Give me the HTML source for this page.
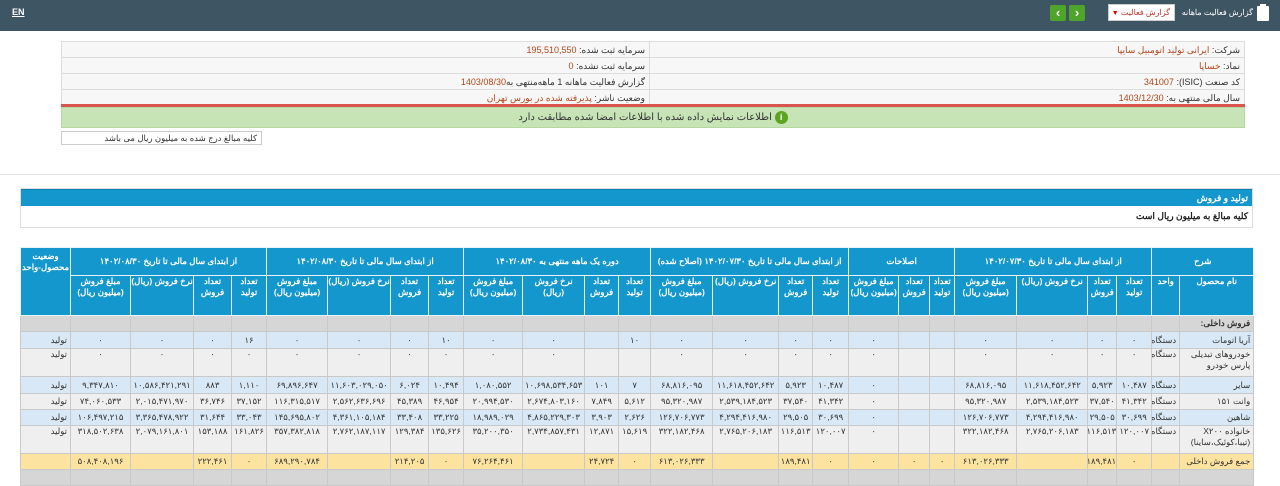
<!DOCTYPE html>
<html><head><meta charset="utf-8">
<style>
*{box-sizing:border-box;margin:0;padding:0}
html,body{width:1280px;height:473px;overflow:hidden;background:#fff;font-family:"Liberation Sans","Noto Sans CJK SC",sans-serif;font-size:9px;color:#333}
.abs{position:absolute}
#top{left:0;top:0;width:1280px;height:31px;background:#3e5563}
.info{left:61px;top:41px;width:1184px;border:1px solid #ddd;background:#f7f7f7;direction:rtl}
.info div{height:16px;border-bottom:1px solid #ddd;display:flex}
.info span{display:block;width:595px;padding:3px 4px;line-height:10px;color:#333}
.info span+span{width:589px;border-right:1px solid #ddd}
.info b{font-weight:normal;color:#b5451b}
table{border-collapse:collapse;table-layout:fixed;direction:rtl}
td,th{border:1px solid #c9c9c9;text-align:center;overflow:hidden;line-height:11px;font-size:8.5px;padding:0}
td{white-space:nowrap}
th{background:#1497cc;color:#fff;border-color:#e8f3f8;font-weight:bold}
tr.b td{background:#d8e8f6}
tr.g td{background:#efefef}
tr.s td{background:#d6d6d6}
tr.y td{background:#fde3a0}
td.n{text-align:right;padding-right:3px}
td.w{white-space:normal}
</style></head><body>
<div id="top" class="abs">
 <div class="abs" style="left:12px;top:7px;color:#fff;font-size:9px;font-weight:bold;text-decoration:underline">EN</div>
 <div class="abs" style="left:1050px;top:5px;width:16px;height:16px;background:#4fa52a;border-radius:2px;color:#fff;font-size:13px;line-height:15px;text-align:center;font-weight:bold">‹</div>
 <div class="abs" style="left:1069px;top:5px;width:16px;height:16px;background:#4fa52a;border-radius:2px;color:#fff;font-size:13px;line-height:15px;text-align:center;font-weight:bold">›</div>
 <div class="abs" style="left:1108px;top:4px;width:67px;height:17px;background:#fff;border:1px solid #ccc;direction:rtl;color:#c0392b;font-size:8px;line-height:15px;padding-right:4px;white-space:nowrap;overflow:hidden">گزارش فعالیت <span style="color:#d00;font-size:7px">▼</span></div>
 <div class="abs" style="left:1180px;top:8px;color:#fff;font-size:8px;direction:rtl;width:73px;white-space:nowrap;text-align:right;letter-spacing:-0.2px">گزارش فعالیت ماهانه</div>
 <div class="abs" style="left:1257px;top:6px;width:12px;height:15px;background:#fff;border-radius:1px"></div>
 <div class="abs" style="left:1260px;top:4px;width:6px;height:3px;background:#fff"></div>
</div>
<div class="info abs">
 <div><span>شرکت: <b>ایرانی تولید اتومبیل سایپا</b></span><span>سرمایه ثبت شده: <b>195,510,550</b></span></div>
 <div><span>نماد: <b>خساپا</b></span><span>سرمایه ثبت نشده: <b>0</b></span></div>
 <div><span>کد صنعت (ISIC): <b>341007</b></span><span>گزارش فعالیت ماهانه 1 ماهه‌منتهی به<b>1403/08/30</b></span></div>
 <div style="border-bottom:0"><span>سال مالی منتهی به: <b>1403/12/30</b></span><span>وضعیت ناشر: <b>پذیرفته شده در بورس تهران</b></span></div>
</div>
<div class="abs" style="left:61px;top:104px;width:1184px;height:3px;background:#d9534f"></div>
<div class="abs" style="left:61px;top:107px;width:1184px;height:21px;background:#c6e4b6;border:1px solid #b5d8a0;text-align:center;direction:rtl;font-size:10px;line-height:19px;color:#333"><span style="display:inline-block;width:13px;height:13px;border-radius:50%;background:#5da521;color:#fff;font-size:9px;line-height:13px;vertical-align:middle;font-weight:bold">i</span> اطلاعات نمایش داده شده با اطلاعات امضا شده مطابقت دارد</div>
<div class="abs" style="left:61px;top:131px;width:201px;height:14px;border:1px solid #ccc;direction:rtl;font-size:8.5px;line-height:12px;padding-right:4px;color:#333">کلیه مبالغ درج شده به میلیون ریال می باشد</div>
<div class="abs" style="left:0;top:174px;width:1280px;height:1px;background:#e6e6e6"></div>
<div class="abs" style="left:20px;top:188px;width:1233px;height:40px;border:1px solid #ddd;direction:rtl">
 <div style="background:#1497cc;height:17px;color:#fff;font-weight:bold;font-size:9px;line-height:17px;padding-right:4px;border-top:1px solid #0c7fae">تولید و فروش</div>
 <div style="height:21px;font-weight:bold;font-size:9px;line-height:20px;padding-right:4px;color:#222">کلیه مبالغ به میلیون ریال است</div>
</div>
<table class="abs" style="left:20px;top:247px;width:1233px">
<colgroup><col style="width:74px"><col style="width:28px"><col style="width:35px"><col style="width:29px"><col style="width:71px"><col style="width:62px"><col style="width:25px"><col style="width:31px"><col style="width:50px"><col style="width:36px"><col style="width:34px"><col style="width:66px"><col style="width:62px"><col style="width:32px"><col style="width:34px"><col style="width:62px"><col style="width:59px"><col style="width:35px"><col style="width:38px"><col style="width:63px"><col style="width:61px"><col style="width:35px"><col style="width:38px"><col style="width:63px"><col style="width:60px"><col style="width:50px"></colgroup>
<tr style="height:28px"><th colspan="2">شرح</th><th colspan="4">از ابتدای سال مالی تا تاریخ ۱۴۰۲/۰۷/۳۰</th><th colspan="3">اصلاحات</th><th colspan="4">از ابتدای سال مالی تا تاریخ ۱۴۰۲/۰۷/۳۰ (اصلاح شده)</th><th colspan="4">دوره یک ماهه منتهی به ۱۴۰۲/۰۸/۳۰</th><th colspan="4">از ابتدای سال مالی تا تاریخ ۱۴۰۲/۰۸/۳۰</th><th colspan="4">از ابتدای سال مالی تا تاریخ ۱۴۰۲/۰۸/۳۰</th><th rowspan="2" style="vertical-align:top;padding-top:3px">وضعیت محصول-واحد</th></tr>
<tr style="height:40px;vertical-align:top"><th>نام محصول</th><th>واحد</th><th>تعداد تولید</th><th>تعداد فروش</th><th>نرخ فروش (ریال)</th><th>مبلغ فروش (میلیون ریال)</th><th>تعداد تولید</th><th>تعداد فروش</th><th>مبلغ فروش (میلیون ریال)</th><th>تعداد تولید</th><th>تعداد فروش</th><th>نرخ فروش (ریال)</th><th>مبلغ فروش (میلیون ریال)</th><th>تعداد تولید</th><th>تعداد فروش</th><th>نرخ فروش (ریال)</th><th>مبلغ فروش (میلیون ریال)</th><th>تعداد تولید</th><th>تعداد فروش</th><th>نرخ فروش (ریال)</th><th>مبلغ فروش (میلیون ریال)</th><th>تعداد تولید</th><th>تعداد فروش</th><th>نرخ فروش (ریال)</th><th>مبلغ فروش (میلیون ریال)</th></tr>
<tr class="s" style="height:16px"><td class="n" style="font-weight:bold">فروش داخلی:</td><td></td><td></td><td></td><td></td><td></td><td></td><td></td><td></td><td></td><td></td><td></td><td></td><td></td><td></td><td></td><td></td><td></td><td></td><td></td><td></td><td></td><td></td><td></td><td></td><td></td></tr>
<tr class="b" style="height:17px"><td class="n">آریا اتومات</td><td class="n">دستگاه</td><td>۰</td><td>۰</td><td>۰</td><td>۰</td><td></td><td></td><td>۰</td><td>۰</td><td>۰</td><td>۰</td><td>۰</td><td>۱۰</td><td></td><td>۰</td><td>۰</td><td>۱۰</td><td>۰</td><td>۰</td><td>۰</td><td>۱۶</td><td>۰</td><td>۰</td><td>۰</td><td class="n">تولید</td></tr>
<tr class="g" style="height:28px;vertical-align:top"><td class="n w">خودروهای تبدیلی پارس خودرو</td><td class="n">دستگاه</td><td>۰</td><td>۰</td><td>۰</td><td>۰</td><td></td><td></td><td>۰</td><td>۰</td><td>۰</td><td>۰</td><td>۰</td><td></td><td></td><td>۰</td><td>۰</td><td>۰</td><td>۰</td><td>۰</td><td>۰</td><td>۰</td><td>۰</td><td>۰</td><td>۰</td><td class="n">تولید</td></tr>
<tr class="b" style="height:17px"><td class="n">سایر</td><td class="n">دستگاه</td><td>۱۰,۴۸۷</td><td>۵,۹۲۳</td><td>۱۱,۶۱۸,۴۵۲,۶۴۲</td><td>۶۸,۸۱۶,۰۹۵</td><td></td><td></td><td>۰</td><td>۱۰,۴۸۷</td><td>۵,۹۲۳</td><td>۱۱,۶۱۸,۴۵۲,۶۴۲</td><td>۶۸,۸۱۶,۰۹۵</td><td>۷</td><td>۱۰۱</td><td>۱۰,۶۹۸,۵۳۴,۶۵۳</td><td>۱,۰۸۰,۵۵۲</td><td>۱۰,۴۹۴</td><td>۶,۰۲۴</td><td>۱۱,۶۰۳,۰۲۹,۰۵۰</td><td>۶۹,۸۹۶,۶۴۷</td><td>۱,۱۱۰</td><td>۸۸۳</td><td>۱۰,۵۸۶,۴۲۱,۲۹۱</td><td>۹,۳۴۷,۸۱۰</td><td class="n">تولید</td></tr>
<tr class="g" style="height:16px"><td class="n">وانت ۱۵۱</td><td class="n">دستگاه</td><td>۴۱,۳۴۲</td><td>۳۷,۵۴۰</td><td>۲,۵۳۹,۱۸۴,۵۲۳</td><td>۹۵,۳۲۰,۹۸۷</td><td></td><td></td><td>۰</td><td>۴۱,۳۴۲</td><td>۳۷,۵۴۰</td><td>۲,۵۳۹,۱۸۴,۵۲۳</td><td>۹۵,۳۲۰,۹۸۷</td><td>۵,۶۱۲</td><td>۷,۸۴۹</td><td>۲,۶۷۴,۸۰۳,۱۶۰</td><td>۲۰,۹۹۴,۵۳۰</td><td>۴۶,۹۵۴</td><td>۴۵,۳۸۹</td><td>۲,۵۶۲,۶۳۶,۶۹۶</td><td>۱۱۶,۳۱۵,۵۱۷</td><td>۳۷,۱۵۲</td><td>۳۶,۷۴۶</td><td>۲,۰۱۵,۴۷۱,۹۷۰</td><td>۷۴,۰۶۰,۵۳۳</td><td class="n">تولید</td></tr>
<tr class="b" style="height:16px"><td class="n">شاهین</td><td class="n">دستگاه</td><td>۳۰,۶۹۹</td><td>۲۹,۵۰۵</td><td>۴,۲۹۴,۴۱۶,۹۸۰</td><td>۱۲۶,۷۰۶,۷۷۳</td><td></td><td></td><td>۰</td><td>۳۰,۶۹۹</td><td>۲۹,۵۰۵</td><td>۴,۲۹۴,۴۱۶,۹۸۰</td><td>۱۲۶,۷۰۶,۷۷۳</td><td>۲,۶۲۶</td><td>۳,۹۰۳</td><td>۴,۸۶۵,۲۲۹,۳۰۳</td><td>۱۸,۹۸۹,۰۲۹</td><td>۳۳,۲۲۵</td><td>۳۳,۴۰۸</td><td>۴,۳۶۱,۱۰۵,۱۸۴</td><td>۱۴۵,۶۹۵,۸۰۲</td><td>۳۳,۰۴۳</td><td>۳۱,۶۴۴</td><td>۳,۳۶۵,۴۷۸,۹۲۲</td><td>۱۰۶,۴۹۷,۲۱۵</td><td class="n">تولید</td></tr>
<tr class="g" style="height:28px;vertical-align:top"><td class="n w">خانواده X۲۰۰ (تیبا،کوئیک،ساینا)</td><td class="n">دستگاه</td><td>۱۲۰,۰۰۷</td><td>۱۱۶,۵۱۳</td><td>۲,۷۶۵,۲۰۶,۱۸۳</td><td>۳۲۲,۱۸۲,۴۶۸</td><td></td><td></td><td>۰</td><td>۱۲۰,۰۰۷</td><td>۱۱۶,۵۱۳</td><td>۲,۷۶۵,۲۰۶,۱۸۳</td><td>۳۲۲,۱۸۲,۴۶۸</td><td>۱۵,۶۱۹</td><td>۱۲,۸۷۱</td><td>۲,۷۳۴,۸۵۷,۴۳۱</td><td>۳۵,۲۰۰,۳۵۰</td><td>۱۳۵,۶۲۶</td><td>۱۲۹,۳۸۴</td><td>۲,۷۶۲,۱۸۷,۱۱۷</td><td>۳۵۷,۳۸۲,۸۱۸</td><td>۱۶۱,۸۲۶</td><td>۱۵۳,۱۸۸</td><td>۲,۰۷۹,۱۶۱,۸۰۱</td><td>۳۱۸,۵۰۲,۶۳۸</td><td class="n">تولید</td></tr>
<tr class="y" style="height:16px"><td class="n">جمع فروش داخلی</td><td></td><td>۰</td><td>۱۸۹,۴۸۱</td><td></td><td>۶۱۳,۰۲۶,۳۳۳</td><td>۰</td><td>۰</td><td>۰</td><td>۰</td><td>۱۸۹,۴۸۱</td><td></td><td>۶۱۳,۰۲۶,۳۳۳</td><td>۰</td><td>۲۴,۷۲۴</td><td></td><td>۷۶,۲۶۴,۴۶۱</td><td>۰</td><td>۲۱۴,۲۰۵</td><td></td><td>۶۸۹,۲۹۰,۷۸۴</td><td>۰</td><td>۲۲۲,۴۶۱</td><td></td><td>۵۰۸,۴۰۸,۱۹۶</td><td></td></tr>
<tr class="s" style="height:16px"><td></td><td></td><td></td><td></td><td></td><td></td><td></td><td></td><td></td><td></td><td></td><td></td><td></td><td></td><td></td><td></td><td></td><td></td><td></td><td></td><td></td><td></td><td></td><td></td><td></td><td></td></tr>
</table>
</body></html>
